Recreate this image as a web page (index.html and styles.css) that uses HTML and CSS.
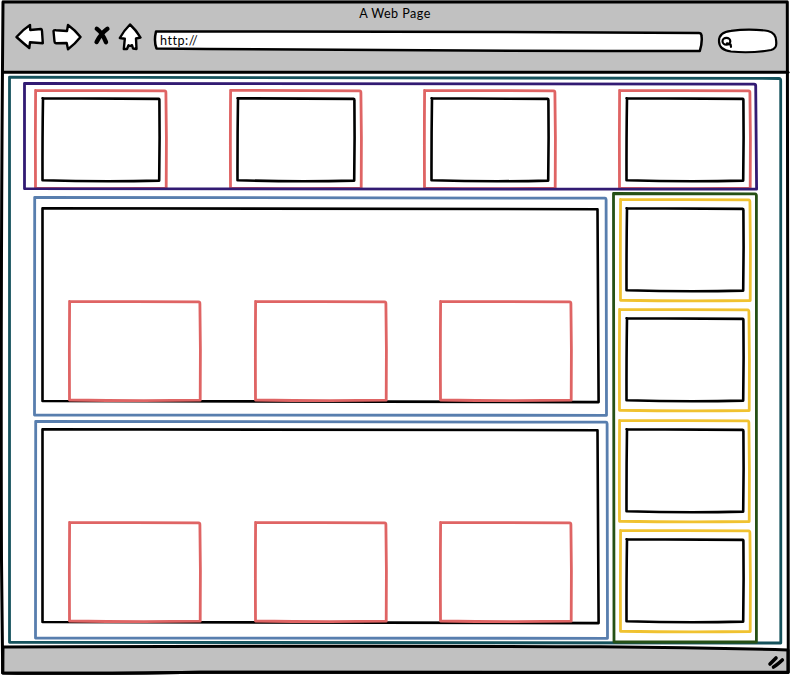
FILE: index.html
```html
<!DOCTYPE html>
<html lang="en">
<head>
<meta charset="utf-8">
<title>A Web Page</title>
<link rel="stylesheet" href="styles.css">
</head>
<body>
<svg class="defs" aria-hidden="true">
  <symbol id="tile" viewBox="0 0 120 86" preserveAspectRatio="none"><path d="M1.5 1.3 Q50 1.4 117.6 1.9 Q118.6 2 118.4 4 L118.6 40 L118.2 83.6 Q60 85 1.5 83.2 Q1.4 40 2 1.3Z"/></symbol>
  <symbol id="card" viewBox="0 0 134 102" preserveAspectRatio="none"><path d="M1.5 1.3 Q60 1.3 130.5 1.8 Q132 1.8 131.9 4 L132.4 50 L132.2 100.2 Q70 101 1.5 100 Q1.2 50 1.6 1.3Z"/></symbol>
  <symbol id="stage" viewBox="0 0 559 196" preserveAspectRatio="none"><path d="M1.5 1.3 Q280 1.6 556.5 2.2 L557.6 195.1 Q280 195.6 1.5 194 L1.5 1.3Z"/></symbol>
  <symbol id="panel" viewBox="0 0 575 221" preserveAspectRatio="none"><path d="M1.7 1.3 Q280 1.4 572 2.2 Q573.2 2.3 573.1 4 L573.5 219.3 Q290 220 1.5 219 L1.7 1.3Z"/></symbol>
  <symbol id="strip" viewBox="0 0 735 109" preserveAspectRatio="none"><path d="M1.5 1.3 Q360 1.4 731 2.1 Q732.8 2.2 732.7 4 L733.6 107.2 Q360 107.6 1.5 106.7Z"/></symbol>
  <symbol id="rail" viewBox="0 0 146 452" preserveAspectRatio="none"><path d="M1.5 1.5 L143 1.8 Q144.5 1.9 144.4 4 L144.4 450 L2 450Z"/></symbol>
  <symbol id="sheet" viewBox="0 0 774 569" preserveAspectRatio="none"><path d="M1.5 1.1 Q380 1.2 771 2.5 Q772.8 2.5 772.7 5 L772.8 567 Q380 567.5 1.5 566.3Z"/></symbol>
</svg>

<div class="window">
  <header class="chrome">
    <h1 class="title">A Web Page</h1>
    <div class="toolbar">
      <nav class="buttons">
        <svg class="icon" width="29" height="28" viewBox="15 23 29 28"><path d="M16.5 37 Q23 29.5 30 25 L30.2 30 L41 29 Q42 29.2 42 31 L42.8 43.2 L30 42.3 L29.3 48 Q23 43 16.5 37Z"/></svg>
        <svg class="icon" width="30" height="28" viewBox="52 23 30 28"><path d="M53.5 31 Q54 30 56 30.2 L67 31 L68 25 Q75 30 80.5 37 Q75 44 68 49.3 L66.7 43 L56 43.2 Q54.5 43 54.5 41.5Z"/></svg>
        <svg class="icon stop" width="20" height="24" viewBox="92 24 20 24"><path d="M96.8 28.8 Q102 32.5 106 42.2M107.4 28.8 Q101 33.5 96.6 42"/></svg>
        <svg class="icon" width="24" height="28" viewBox="118 23 24 28"><path d="M130 24.5 Q136 30 140.5 37.5 L136 38.5 L136.5 49 L133 48.5 L132 45.2 L130 46 L128.5 45.2 L127 49 L123.8 49 L124.8 38.8 L119.8 38 Q124 30.5 130 24.5Z"/></svg>
      </nav>
      <div class="url">
        <svg class="ink" viewBox="0 0 550 24" preserveAspectRatio="none"><path d="M3 2.5 Q280 2 545 4 Q548.5 3.5 548.5 7 Q549.5 13 546.8 22 Q280 22 3.5 19.5 Q.7 12 3 2.5Z"/></svg>
        <span class="address">http://</span>
      </div>
      <div class="search">
        <svg width="62" height="27" viewBox="717 27 62 27"><path d="M719 41 Q719 32 731 30.8 Q750 28.3 768 31 Q776.5 33 776.2 42 Q777 48.5 771 50 Q751 53.5 731 51.5 Q719 50 719 41Z"/><ellipse cx="726.4" cy="41.3" rx="3.9" ry="3.4"/><path d="M727 43.4 L730.6 44.6 L731 46.8"/></svg>
      </div>
    </div>
  </header>

  <main class="sheet">
    <svg class="ink teal"><use href="#sheet"/></svg>
    <section class="strip">
      <div class="card"><svg class="ink red"><use href="#card"/></svg><div class="tile"><svg class="ink"><use href="#tile"/></svg></div></div>
      <div class="card"><svg class="ink red"><use href="#card"/></svg><div class="tile"><svg class="ink"><use href="#tile"/></svg></div></div>
      <div class="card"><svg class="ink red"><use href="#card"/></svg><div class="tile"><svg class="ink"><use href="#tile"/></svg></div></div>
      <div class="card"><svg class="ink red"><use href="#card"/></svg><div class="tile"><svg class="ink"><use href="#tile"/></svg></div></div>
      <svg class="ink purple"><use href="#strip"/></svg>
    </section>
    <div class="columns">
      <div class="panels">
        <section class="panel">
          <svg class="ink blue"><use href="#panel"/></svg>
          <div class="stage">
            <svg class="ink"><use href="#stage"/></svg>
            <div class="slot"><svg class="ink red"><use href="#card"/></svg></div>
            <div class="slot"><svg class="ink red"><use href="#card"/></svg></div>
            <div class="slot"><svg class="ink red"><use href="#card"/></svg></div>
          </div>
        </section>
        <section class="panel shifted">
          <svg class="ink blue"><use href="#panel"/></svg>
          <div class="stage">
            <svg class="ink"><use href="#stage"/></svg>
            <div class="slot"><svg class="ink red"><use href="#card"/></svg></div>
            <div class="slot"><svg class="ink red"><use href="#card"/></svg></div>
            <div class="slot"><svg class="ink red"><use href="#card"/></svg></div>
          </div>
        </section>
      </div>
      <aside class="rail">
        <svg class="ink green"><use href="#rail"/></svg>
        <div class="item inset"><svg class="ink yellow"><use href="#card"/></svg><div class="tile"><svg class="ink"><use href="#tile"/></svg></div></div>
        <div class="item"><svg class="ink yellow"><use href="#card"/></svg><div class="tile"><svg class="ink"><use href="#tile"/></svg></div></div>
        <div class="item"><svg class="ink yellow"><use href="#card"/></svg><div class="tile"><svg class="ink"><use href="#tile"/></svg></div></div>
        <div class="item inset"><svg class="ink yellow"><use href="#card"/></svg><div class="tile"><svg class="ink"><use href="#tile"/></svg></div></div>
      </aside>
    </div>
  </main>

  <svg class="ink frame" viewBox="0 0 790 675">
    <path class="bar" d="M3 647 Q400 645.5 600 646.8 Q700 647.5 788 650 L788 672.5 Q500 672 200 672.3 Q80 674 2.7 673Z"/>
    <path d="M3 2 L787.3 2 Q787 300 788.3 672.3 Q500 672.3 200 672.3 Q80 674 2.7 673 Q2 620 1.5 560 Q.5 300 3 2Z"/>
    <path d="M3 72.3 Q400 73.7 788 72.3"/>
    <path class="grip" d="M770 664 L776 658M773.5 667 Q777 665 782.3 660"/>
  </svg>
</div>
</body>
</html>
```

FILE: styles.css
```css
* { box-sizing: border-box; }

body {
  margin: 0;
  background: #fff;
  color: #000;
  font-family: Lato, "Liberation Sans", sans-serif;
}

.defs { position: absolute; width: 0; height: 0; }

/* Hand-drawn outline that fills its parent */
.ink {
  position: absolute;
  inset: 0;
  width: 100%;
  height: 100%;
  overflow: visible;
  pointer-events: none;
  fill: none;
  stroke: #000;
  stroke-width: 2.6;
  stroke-linejoin: round;
  stroke-linecap: round;
}
symbol { overflow: visible; }
.teal { stroke: #15525c; }
.purple { stroke: #321b73; }
.red { stroke: #df6464; }
.blue { stroke: #587eae; }
.green { stroke: #265015; }
.yellow { stroke: #f0c230; }
.teal, .purple, .red, .blue, .green, .yellow { stroke-width: 2.8; }

.window {
  position: relative;
  width: 790px;
  height: 675px;
  overflow: hidden;
}

.chrome {
  height: 73px;
  margin: 0 2px;
  padding-top: 5px;
  background: #c1c1c1;
}
.title {
  margin: 0;
  height: 17px;
  font-size: 12.6px;
  line-height: 17px;
  font-weight: 400;
  letter-spacing: .45px;
  text-align: center;
}
.toolbar {
  display: flex;
  align-items: flex-start;
  padding-left: 13px;
}
.buttons {
  display: flex;
  width: 138px;
  padding-top: 1px;
}
.icon {
  fill: #fff;
  stroke: #000;
  stroke-width: 2.4;
  stroke-linejoin: round;
  margin-right: 8px;
}
.stop {
  fill: none;
  stroke-width: 4.4;
  stroke-linecap: round;
  margin: 1px 6px 0 2px;
}
.url {
  position: relative;
  width: 550px;
  height: 24px;
  margin-top: 7px;
  padding-left: 7px;
}
.url .ink { fill: #fff; stroke-width: 2.5; }
.address {
  position: relative;
  font-size: 12.6px;
  line-height: 23px;
  letter-spacing: .5px;
}
.search {
  margin: 5px 0 0 14px;
  height: 27px;
}
.search svg {
  display: block;
  fill: #fff;
  stroke: #000;
  stroke-width: 2.2;
  stroke-linecap: round;
}

.sheet {
  position: relative;
  width: 774px;
  height: 569px;
  margin: 2.5px 0 0 8px;
  padding: 6.5px 24px 0 15px;
}
.strip {
  position: relative;
  display: flex;
  justify-content: space-between;
  height: 109px;
  padding: 7px 6px 0 11px;
}
.card {
  position: relative;
  width: 134px;
  height: 101px;
  padding: 8px 7px;
}
.tile {
  position: relative;
  width: 120px;
  height: 86px;
}
.columns {
  display: flex;
  justify-content: space-between;
  margin-top: 1px;
  padding-left: 10px;
}
.panels {
  display: grid;
  align-content: start;
  gap: 3px;
  padding-top: 4px;
}
.panel {
  position: relative;
  width: 575px;
  height: 221px;
  padding: 10.5px 0 0 8px;
}
.shifted {
  margin-left: 1px;
  height: 220px;
  padding: 7.5px 0 0 7px;
}
.stage {
  position: relative;
  display: flex;
  justify-content: space-between;
  align-items: flex-end;
  width: 559px;
  height: 196px;
  padding: 0 27px 1px 27px;
}
.slot {
  position: relative;
  width: 134px;
  height: 102px;
}
.rail {
  position: relative;
  display: grid;
  align-content: start;
  gap: 6px;
  width: 146px;
  height: 452px;
  padding: 6px 0 0 6px;
}
.item {
  position: relative;
  width: 133px;
  height: 104.3px;
  padding: 9px 0 0 7px;
}
.inset { margin-left: 1px; padding-left: 6px; }
.frame { stroke-width: 3; }
.bar { fill: #c1c1c1; }
.grip { stroke-width: 3.6; }
```
